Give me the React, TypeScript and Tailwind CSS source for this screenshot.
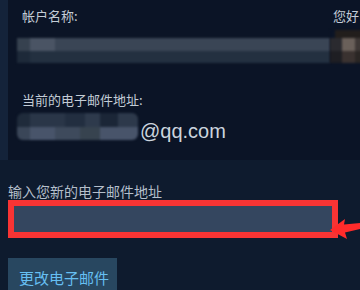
import React from "react";

const cjk = { fontFamily: '"Noto Sans CJK SC", "Noto Sans", sans-serif' };

function Block({ w, c }: { w: number; c: string }) {
  return <div className="h-full shrink-0" style={{ width: w, backgroundColor: c }} />;
}

export default function App() {
  return (
    <div
      className="relative w-[360px] h-[290px] overflow-hidden bg-[#0e1b2e]"
      style={cjk}
    >
      <div className="flex h-[160px]">
        <div className="w-2 shrink-0 bg-[#14233a]" />
        <div className="flex-1 flex flex-col bg-[#0b1426] pl-[9px] pt-[8px] overflow-hidden">
          <div className="flex items-start">
            <span className="pl-[5px] text-[13px] leading-[16px] text-[#c3ccd6]">帐户名称:</span>
            <span className="ml-auto mr-[1px] shrink-0 whitespace-nowrap text-[13px] leading-[16px] text-[#c3ccd6]">
              您好
            </span>
          </div>
          <div className="mt-[6px] flex items-end h-[33px]">
            <div className="flex flex-col w-[313px] h-[25px] blur-[1.2px]">
              <div className="flex h-[13px]">
                <Block w={13} c="#36414f" />
                <Block w={25} c="#4a5464" />
                <Block w={275} c="#3a4555" />
              </div>
              <div className="flex h-[12px]">
                <Block w={13} c="#1d2939" />
                <Block w={300} c="#233040" />
              </div>
            </div>
            <div className="flex flex-col flex-1 h-[33px] blur-[1px]">
              <div className="flex h-[8px]">
                <Block w={5} c="#0b1426" />
                <Block w={40} c="#221e1c" />
              </div>
              <div className="flex h-[13px]">
                <Block w={12} c="#2a2a2f" />
                <Block w={13} c="#6a605a" />
                <Block w={10} c="#3e3836" />
              </div>
              <div className="flex h-[12px]">
                <Block w={12} c="#1e1e23" />
                <Block w={13} c="#3a3230" />
                <Block w={10} c="#2a2624" />
              </div>
            </div>
          </div>
          <div className="mt-[29px] pl-[5px] text-[13px] leading-[16px] text-[#c3ccd6]">
            当前的电子邮件地址:
          </div>
          <div className="mt-[5px] flex items-start">
            <div className="flex flex-col w-[121px] h-[27px] rounded-[6px] overflow-hidden blur-[1.2px]">
              <div className="flex h-[14px]">
                <Block w={13} c="#1f2b3b" />
                <Block w={35} c="#2a3648" />
                <Block w={20} c="#222e40" />
                <Block w={15} c="#2e3a4c" />
                <Block w={18} c="#1b2637" />
                <Block w={20} c="#2d394b" />
              </div>
              <div className="flex h-[13px]">
                <Block w={13} c="#3a4658" />
                <Block w={25} c="#48546a" />
                <Block w={25} c="#3e4a5c" />
                <Block w={20} c="#37434f" />
                <Block w={38} c="#48546a" />
              </div>
            </div>
            <span
              className="ml-[2px] mt-[6px] text-[20px] leading-[24px] text-[#ccd5de]"
              style={{ fontFamily: '"Liberation Sans", Arial, sans-serif' }}
            >
              @qq.com
            </span>
          </div>
        </div>
      </div>

      <div className="pl-2 flex flex-col">
        <div className="mt-[22px] text-[14px] leading-[18px] text-[#b4bfcb]">
          输入您新的电子邮件地址
        </div>
        <div className="w-[330px] h-[38px] border-[6px] border-[#f83434] bg-[#34465f]" />
        <div className="mt-[20px] w-[109px] h-[40px] bg-[#284760] pl-[11px] pt-[7px]">
          <span className="text-[15px] leading-[20px] text-[#66bff2]">更改电子邮件</span>
        </div>
      </div>

      <svg
        className="absolute left-[328px] top-[215px]"
        width="32"
        height="27"
        viewBox="0 0 32 27"
      >
        <polygon
          points="2,15 17,4 16,9.5 32,8 32,14 17,17.5 19,24"
          fill="#ff2b2b"
        />
      </svg>
    </div>
  );
}
